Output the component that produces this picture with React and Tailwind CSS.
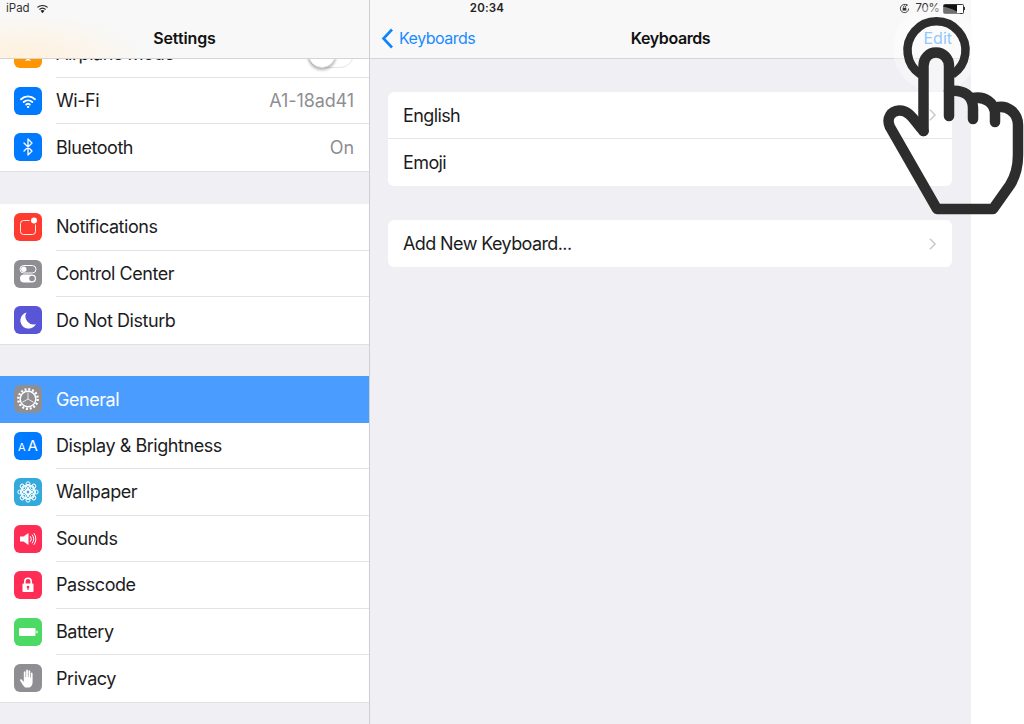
import React from "react";

const W = "#ffffff";

function Wifi({ color = W, sw = 1.9 }) {
  return (
    <g fill="none" stroke={color} strokeWidth={sw} strokeLinecap="round">
      <path d="M7 12.2a10.2 10.2 0 0 1 14 0" />
      <path d="M9.7 15a6.4 6.4 0 0 1 8.6 0" />
      <path d="M12.2 17.6a2.8 2.8 0 0 1 3.6 0" />
      <circle cx="14" cy="20" r="0.7" fill={color} strokeWidth="1" />
    </g>
  );
}

const icons = {
  plane: (
    <path d="M14 7l1.4 5 5.6 3v1.6l-5.6-1.6-.4 4 1.6 1.2V21l-2.6-.8-2.600.8v-.8l1.600-1.200-.4-4L7 16.600V15l5.600-3z" fill={W} />
  ),
  wifi: <Wifi />,
  bluetooth: (
    <path d="M10 10l8 8-4 4V6l4 4-8 8" fill="none" stroke={W} strokeWidth="1.300" strokeLinejoin="round" strokeLinecap="round" />
  ),
  notifications: (
    <g>
      <rect x="6.500" y="7.500" width="15" height="14" rx="3" fill="none" stroke="#ffffff" strokeOpacity="0.9" strokeWidth="1" />
      <circle cx="20" cy="7.500" r="4.400" fill="#ff3b30" />
      <circle cx="20" cy="7.500" r="3" fill={W} />
    </g>
  ),
  control: (
    <g>
      <rect x="6" y="5.500" width="16" height="7.500" rx="3.750" fill="none" stroke={W} strokeWidth="1" />
      <circle cx="9.800" cy="9.250" r="2.700" fill={W} />
      <rect x="6" y="14.500" width="16" height="8" rx="4" fill={W} />
      <circle cx="18" cy="18.500" r="2.800" fill="#8e8e93" />
    </g>
  ),
  moon: <path d="M12.500 6.500a8.200 8.200 0 1 0 9.500 11.500 8 8 0 0 1-9.500-11.500z" fill={W} />,
  gear: (
    <g fill="none" stroke={W}>
      <circle cx="14" cy="14" r="9.700" strokeWidth="2.400" strokeDasharray="2 1.810" />
      <circle cx="14" cy="14" r="7.800" strokeWidth="1.400" />
      <path d="M14 14V7.500M14 14l5.600 3.300M14 14l-5.600 3.300" strokeWidth="0.800" />
    </g>
  ),
  flower: (
    <g fill="none" stroke={W} strokeWidth="1">
      <circle cx="14" cy="14" r="2.200" />
      {[0, 45, 90, 135, 180, 225, 270, 315].map((a) => (
        <g key={a} transform={`rotate(${a} 14 14)`}>
          <circle cx="14" cy="9.200" r="2.800" />
          <circle cx="14" cy="5.800" r="2" />
        </g>
      ))}
    </g>
  ),
  sound: (
    <g>
      <path d="M6 11.500h3.500L14.500 8v12l-5-3.500H6z" fill={W} />
      <g fill="none" stroke={W} strokeWidth="1" strokeLinecap="round">
        <path d="M16.500 11.500a4 4 0 0 1 0 5" />
        <path d="M18.300 10a6.500 6.500 0 0 1 0 8" />
        <path d="M20.100 8.500a9 9 0 0 1 0 11" />
      </g>
    </g>
  ),
  lock: (
    <g>
      <path d="M10.800 13v-2.600a3.200 3.200 0 0 1 6.400 0V13" fill="none" stroke={W} strokeWidth="1.600" />
      <rect x="8.500" y="12.500" width="11" height="8.500" rx="1" fill={W} />
      <circle cx="14" cy="16" r="1.300" fill="#ff2d55" />
      <rect x="13.400" y="16" width="1.200" height="2.800" fill="#ff2d55" />
    </g>
  ),
  battery: (
    <g fill={W}>
      <rect x="5" y="10" width="16.500" height="8" rx="1.200" />
      <rect x="22.300" y="12.800" width="1.200" height="2.400" />
    </g>
  ),
  hand: (
    <path
      d="M11.200 23.500c-1.500-1-3-3.500-5-6.800-.6-1 .7-2 1.700-1l1.900 2.300V8.200c0-1.200 1.700-1.200 1.700 0V13h.600V6.300c0-1.200 1.800-1.200 1.800 0V13h.6V7.200c0-1.200 1.800-1.200 1.800 0V13.500h.6V9.500c0-1.200 1.700-1.200 1.700 0v8.700c0 3-1.800 5.300-4.200 5.300z"
      fill={W}
    />
  ),
};

function Icon({ bg, name, children }) {
  return (
    <div className={`w-7 h-7 shrink-0 rounded-md flex items-center justify-center ${bg}`}>
      {children || (
        <svg viewBox="0 0 28 28" className="w-7 h-7">
          {icons[name]}
        </svg>
      )}
    </div>
  );
}

function Row({ label, value, bg, name, last, selected, toggle, children }) {
  return (
    <div className={`h-[46.5px] flex items-center pl-[14px] ${selected ? "bg-[#4a9dff]" : "bg-white"}`}>
      <Icon bg={bg} name={name}>
        {children}
      </Icon>
      <div
        className={`ml-[14px] flex-1 h-full flex items-center justify-between pr-[15px] ${
          last || selected ? "" : "border-b border-[#e3e3e6]"
        }`}
      >
        <span className={`text-[18px] tracking-[-0.45px] ${selected ? "text-white" : "text-[#1c1c1e]"}`}>{label}</span>
        {value && <span className="text-[18px] tracking-[-0.1px] text-[#8e8e93]">{value}</span>}
        {toggle && (
          <div className="relative w-[47px] h-[28px] rounded-full border border-[#e5e5e5] bg-white">
            <div className="absolute left-0 top-[-1px] w-[28px] h-[28px] rounded-full bg-white border border-[#dedede] shadow-[0_2px_3px_rgba(0,0,0,0.3)]" />
          </div>
        )}
      </div>
    </div>
  );
}

function Chevron() {
  return (
    <svg viewBox="0 0 10 16" className="w-[9px] h-[14px]">
      <path d="M2 2l6 6-6 6" fill="none" stroke="#c7c7cc" strokeWidth="1.600" />
    </svg>
  );
}

function KeyRow({ label, chevron, last }) {
  return (
    <div
      className={`h-[47px] pl-[15px] pr-[15px] flex items-center justify-between ${
        last ? "" : "border-b border-[#e6e6ea]"
      }`}
    >
      <span className="text-[18px] tracking-[-0.6px] text-[#1c1c1e]">{label}</span>
      {chevron && <Chevron />}
    </div>
  );
}

export default function App() {
  return (
    <div className="relative w-[1024px] h-[724px] overflow-hidden bg-white font-['Inter','Liberation_Sans',sans-serif]">
      <div className="relative w-[971px] h-full flex bg-[#efeff4]">
        {/* Sidebar */}
        <aside className="relative w-[370px] h-full shrink-0 border-r border-[#cfcfd3] overflow-hidden">
          <header className="absolute inset-x-0 top-0 h-[59px] z-10 border-b border-[#d5d5d8] bg-[#f8f8f8] bg-[radial-gradient(ellipse_120px_45px_at_25px_58px,#fff1dd,transparent)] flex items-end justify-center pb-[8px]">
            <span className="text-[16px] font-semibold tracking-[-0.1px] text-[#111]">Settings</span>
          </header>
          <div className="pt-[31px]">
            <div className="border-b border-[#e0e0e4]">
              <Row label="Airplane Mode" bg="bg-[#ff9500]" name="plane" toggle />
              <Row label="Wi-Fi" value="A1-18ad41" bg="bg-[#007aff]" name="wifi" />
              <Row label="Bluetooth" value="On" bg="bg-[#007aff]" name="bluetooth" last />
            </div>
            <div className="mt-[32.5px] border-b border-[#e0e0e4]">
              <Row label="Notifications" bg="bg-[#ff3b30]" name="notifications" />
              <Row label="Control Center" bg="bg-[#8e8e93]" name="control" />
              <Row label="Do Not Disturb" bg="bg-[#5856d6]" name="moon" last />
            </div>
            <div className="mt-[31.5px] border-b border-[#e0e0e4]">
              <Row label="General" bg="bg-[#8e8e93]" name="gear" selected />
              <Row label="Display & Brightness" bg="bg-[#007aff]">
                <span className="text-white font-normal leading-none flex items-baseline gap-[2px]">
                  <span className="text-[11px]">A</span>
                  <span className="text-[15px]">A</span>
                </span>
              </Row>
              <Row label="Wallpaper" bg="bg-[#34aadc]" name="flower" />
              <Row label="Sounds" bg="bg-[#ff2d55]" name="sound" />
              <Row label="Passcode" bg="bg-[#ff2d55]" name="lock" />
              <Row label="Battery" bg="bg-[#4cd964]" name="battery" />
              <Row label="Privacy" bg="bg-[#8e8e93]" name="hand" last />
            </div>
          </div>
        </aside>

        {/* Detail pane */}
        <main className="flex-1 h-full flex flex-col">
          <header className="relative h-[59px] shrink-0 border-b border-[#d5d5d8] bg-[#f8f8f8] flex items-end justify-between pb-[8px] pl-[11px] pr-[19px]">
            <div className="flex items-center gap-[5px] text-[#1a8bff]">
              <svg viewBox="0 0 13 21" className="w-[13px] h-[21px]">
                <path d="M11 1.500L2.500 10.500l8.500 9" fill="none" stroke="#0a84ff" strokeWidth="2.600" />
              </svg>
              <span className="text-[16px] tracking-[-0.5px]">Keyboards</span>
            </div>
            <span className="absolute inset-x-0 bottom-[8px] text-center text-[16px] font-semibold tracking-[-0.4px] text-[#111]">
              Keyboards
            </span>
            <span className="text-[16px] text-[#4aa2ff]">Edit</span>
          </header>
          <div className="pt-[33px] pl-[18px] pr-[19px]">
            <div className="rounded-md bg-white">
              <KeyRow label="English" chevron />
              <KeyRow label="Emoji" last />
            </div>
            <div className="mt-[34px] rounded-md bg-white">
              <KeyRow label="Add New Keyboard..." chevron last />
            </div>
          </div>
        </main>

        {/* Status bar */}
        <div className="absolute inset-x-0 top-0 h-[17px] z-20 flex items-center justify-between pl-[6px] pr-[6px] text-[11.5px] text-[#333]">
          <div className="flex items-center gap-[6px]">
            <span>iPad</span>
            <svg viewBox="0 0 14 10" className="w-[13px] h-[10px]">
              <path d="M7 9.500L4.900 7a3 3 0 0 1 4.200 0z" fill="#222" />
              <path d="M3.700 5.600a5 5 0 0 1 6.600 0" fill="none" stroke="#222" strokeWidth="1.300" />
              <path d="M1.500 3.300a8.300 8.300 0 0 1 11 0" fill="none" stroke="#222" strokeWidth="1.300" />
            </svg>
          </div>
          <span className="absolute left-0 right-0 pl-[3px] text-center font-semibold tracking-[0.2px] text-[#222]">20:34</span>
          <div className="flex items-center">
            <svg viewBox="0 0 12 12" className="w-[11px] h-[11px]">
              <path d="M10.500 6A4.500 4.500 0 1 1 8.500 2.300" fill="none" stroke="#333" strokeWidth="1" />
              <path d="M7.800 0.800l2 1.500-1.800 1.600z" fill="#333" />
              <rect x="4" y="5.300" width="4" height="3" fill="#333" />
              <path d="M4.800 5.300v-1a1.200 1.200 0 0 1 2.400 0v1" fill="none" stroke="#333" strokeWidth="0.800" />
            </svg>
            <span className="ml-[6px] tracking-[-0.3px]">70%</span>
            <div className="ml-[3px] flex items-center">
              <div className="w-[21px] h-[10px] bg-white border border-[#333] rounded-[1.500px]">
                <div className="h-full w-[70%] bg-[#111]" />
              </div>
              <div className="w-[1.500px] h-[3px] bg-[#333]" />
            </div>
          </div>
        </div>
      </div>

      {/* Touch gesture hand */}
      <svg viewBox="0 0 1024 724" className="absolute inset-0 w-[1024px] h-[724px] z-30 pointer-events-none">
        <circle cx="936" cy="49" r="43" fill="#ffffff" fillOpacity="0.4" />
        <g fill="none" stroke="#2d2d2d" strokeWidth="10.500" strokeLinecap="round" strokeLinejoin="round">
          <path d="M920.500 74.500A29 29 0 1 1 952.500 74.500" strokeLinecap="butt" strokeWidth="8.500" />
          <path d="M923.500 131V66C923.500 58 929 52.500 936 52.500C943 52.500 949 58 949 66V116" />
          <path d="M949 91C964 89 973 96 973 108V119" />
          <path d="M973 98C985 96 995 103 995 114V122" />
          <path d="M995 108C1006 104 1018 112 1018 125V155C1018 167 1015 177 1010 185L993 209H937L890 127C886 118 891 111 899 110.500C910 110 915 122 923.500 131" />
        </g>
      </svg>
    </div>
  );
}
